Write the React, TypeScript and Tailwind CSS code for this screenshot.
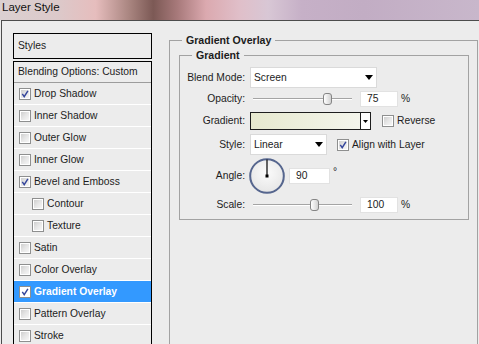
import React from "react";

function Check({ checked, white }: { checked?: boolean; white?: boolean }) {
  return (
    <span className="relative inline-block w-[12px] h-[12px] shrink-0 border border-[#8e8f8f] bg-white">
      <span
        className={
          "absolute inset-[1px] " +
          (white
            ? "bg-white"
            : "bg-[linear-gradient(135deg,#cfcfcf_0%,#e6e6e6_50%,#f6f6f6_100%)]")
        }
      />
      {checked && (
        <svg viewBox="0 0 10 10" className="absolute left-0 top-0 w-[10px] h-[10px]">
          <path d="M2.3 4.9 L4.2 7.6 L7.9 1.8" stroke="#34459b" strokeWidth="1.45" fill="none" />
        </svg>
      )}
    </span>
  );
}

function Arrow() {
  return (
    <svg width="8" height="5" viewBox="0 0 8 5" className="shrink-0">
      <path d="M0 0 H8 L4 5 Z" fill="#000" />
    </svg>
  );
}

function Slider({ thumb }: { thumb: number }) {
  return (
    <div className="relative ml-[8px] w-[99px] h-[18px] flex items-center">
      <div className="w-full h-[2px] border-t border-[#a4a4a4] border-b border-b-white" />
      <div
        className="absolute top-[3px] w-[9px] h-[12px] rounded-[3px] border border-[#858585] bg-[linear-gradient(90deg,#ffffff,#d2d2d2)]"
        style={{ left: thumb }}
      />
    </div>
  );
}

const items: { label: string; checked?: boolean; indent?: boolean; active?: boolean }[] = [
  { label: "Drop Shadow", checked: true },
  { label: "Inner Shadow" },
  { label: "Outer Glow" },
  { label: "Inner Glow" },
  { label: "Bevel and Emboss", checked: true },
  { label: "Contour", indent: true },
  { label: "Texture", indent: true },
  { label: "Satin" },
  { label: "Color Overlay" },
  { label: "Gradient Overlay", checked: true, active: true },
  { label: "Pattern Overlay" },
  { label: "Stroke" },
];

export default function App() {
  return (
    <div className="w-[479px] h-[344px] overflow-hidden flex flex-col bg-[#ececec] text-[#1c1c1c] font-['Liberation_Sans',Arial,sans-serif] text-[10.3px]">
      <div className="h-[20px] shrink-0 pl-[2px] leading-[14px] text-[11.5px] text-[#111] bg-[linear-gradient(90deg,#dbd0d1_0%,#dcc9ca_12%,#e6bdbd_20%,#a98580_27%,#7c5955_32%,#a7797a_37%,#dba9af_43%,#e0bfc9_50%,#d8c7d5_56%,#c6b0c7_63%,#c2adc4_76%,#c8b7cb_100%)]">
        Layer Style
      </div>
      <div className="flex-1 ml-[1px] border-t border-l border-[#4c4c4c] flex items-start pl-[11px] pt-[12px]">
        {/* Left panel */}
        <div className="w-[139px] shrink-0">
          <div className="h-[26px] border border-black flex items-center pl-[4px]">Styles</div>
          <div className="mt-[2px] border border-black border-b-0">
            <div className="h-[21px] border-b border-[#9c9c9c] flex items-center pl-[4px]">
              Blending Options: Custom
            </div>
            {items.map((it) => (
              <div
                key={it.label}
                className={
                  "h-[22px] border-b border-white flex items-center gap-[3px] " +
                  (it.indent ? "pl-[18px] " : "pl-[5px] ") +
                  (it.active ? "bg-[#3399ff] text-white font-bold" : "")
                }
              >
                <Check checked={it.checked} white={it.active} />
                <span>{it.label}</span>
              </div>
            ))}
          </div>
        </div>

        {/* Right panel */}
        <fieldset className="ml-[17px] w-[309px] h-[330px] shrink-0 border border-[#a2a2a2] pl-[9px] pr-[8px]">
          <legend className="ml-[3px] px-[4px] leading-[14px] font-bold text-[10.6px]">Gradient Overlay</legend>
          <fieldset className="mt-[1px] w-[290px] border border-[#a2a2a2] pb-[5px]">
            <legend className="ml-[12px] px-[4px] leading-[14px] font-bold text-[10.6px]">Gradient</legend>

            {/* Blend Mode */}
            <div className="mt-[5px] h-[21px] flex items-center">
              <div className="w-[65px] text-right">Blend Mode:</div>
              <div className="ml-[5px] w-[127px] h-[21px] bg-white border border-[#dadada] flex items-center justify-between pl-[3px] pr-[3px]">
                <span>Screen</span>
                <Arrow />
              </div>
            </div>

            {/* Opacity */}
            <div className="mt-[2px] h-[18px] flex items-center">
              <div className="w-[65px] text-right">Opacity:</div>
              <Slider thumb={70} />
              <div className="ml-[8px] w-[38px] h-[16px] bg-white border border-[#e2e2e2] flex items-center pl-[6px]">75</div>
              <span className="ml-[3px]">%</span>
            </div>

            {/* Gradient */}
            <div className="mt-[4px] h-[18px] flex items-center">
              <div className="w-[65px] text-right">Gradient:</div>
              <div className="ml-[5px] w-[121px] h-[18px] border border-[#1e1e1e] flex">
                <div className="flex-1 bg-[linear-gradient(90deg,#e7e9cf,#f4f5ec)]" />
                <div className="w-[10px] border-l border-[#1e1e1e] bg-white flex items-center justify-center">
                  <svg width="5" height="3" viewBox="0 0 5 3">
                    <path d="M0 0 H5 L2.5 3 Z" fill="#000" />
                  </svg>
                </div>
              </div>
              <span className="ml-[11px] flex">
                <Check />
              </span>
              <span className="ml-[3px]">Reverse</span>
            </div>

            {/* Style */}
            <div className="mt-[4px] h-[21px] flex items-center">
              <div className="w-[65px] text-right">Style:</div>
              <div className="ml-[5px] w-[77px] h-[21px] bg-white border border-[#dadada] flex items-center justify-between pl-[3px] pr-[3px]">
                <span>Linear</span>
                <Arrow />
              </div>
              <span className="ml-[10px] flex">
                <Check checked />
              </span>
              <span className="ml-[3px]">Align with Layer</span>
            </div>

            {/* Angle */}
            <div className="mt-[3px] h-[36px] flex items-center">
              <div className="w-[65px] text-right">Angle:</div>
              <div className="ml-[4px] w-[36px] h-[36px] shrink-0">
                <svg width="36" height="36" viewBox="0 0 36 36">
                  <defs>
                    <radialGradient id="dial" cx="50%" cy="40%" r="60%">
                      <stop offset="0%" stopColor="#fbfbfb" />
                      <stop offset="100%" stopColor="#e6e6e6" />
                    </radialGradient>
                  </defs>
                  <circle cx="18" cy="18" r="16.8" fill="url(#dial)" stroke="#56668e" strokeWidth="2" />
                  <line x1="18" y1="18" x2="18" y2="1.5" stroke="#000" strokeWidth="1.2" />
                  <rect x="16.5" y="16.5" width="3" height="3" fill="#000" />
                </svg>
              </div>
              <div className="ml-[4px] w-[41px] h-[16px] bg-white border border-[#e2e2e2] flex items-center pl-[6px]">90</div>
              <span className="ml-[3px] self-start mt-[9px] leading-[10px]">°</span>
            </div>

            {/* Scale */}
            <div className="mt-[2px] h-[18px] flex items-center">
              <div className="w-[65px] text-right">Scale:</div>
              <Slider thumb={57} />
              <div className="ml-[8px] w-[38px] h-[16px] bg-white border border-[#e2e2e2] flex items-center pl-[6px]">100</div>
              <span className="ml-[3px]">%</span>
            </div>
          </fieldset>
        </fieldset>
      </div>
    </div>
  );
}
